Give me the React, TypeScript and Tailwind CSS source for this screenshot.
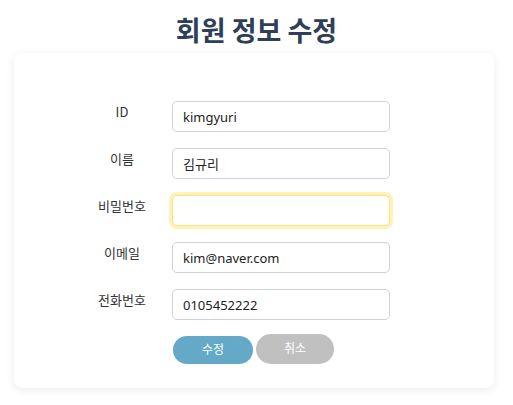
import React from "react";

const rows = [
  { label: "ID", value: "kimgyuri" },
  { label: "이름", value: "김규리" },
  { label: "비밀번호", value: "", focus: true },
  { label: "이메일", value: "kim@naver.com" },
  { label: "전화번호", value: "0105452222" },
];

export default function App() {
  return (
    <div
      className="min-h-[405px] w-[513px] bg-white pt-[14px]"
      style={{ fontFamily: "'Noto Sans', 'Noto Sans CJK KR', sans-serif" }}
    >
      <h1
        className="text-center text-[27px] font-bold leading-[32px] text-[#2e4057]"
        style={{ fontFamily: "'Noto Sans CJK KR', sans-serif" }}
      >
        회원 정보 수정
      </h1>
      <div className="mx-[14px] mt-[7px] w-[480px] rounded-[8px] bg-white pt-[48px] pb-[24px] shadow-[0_2px_10px_rgba(0,0,0,0.08)]">
        <div className="flex flex-col gap-[16px]">
          {rows.map((r) => (
            <div key={r.label} className="flex items-start">
              <div
                className="ml-[58px] w-[100px] text-center text-[13px] leading-[22px] text-[#333]"
                style={{ fontFamily: "'Noto Sans CJK KR', sans-serif" }}
              >
                {r.label}
              </div>
              <input
                readOnly
                value={r.value}
                type="text"
                className={
                  r.focus
                    ? "h-[31px] w-[218px] rounded-[5px] border border-[#ffdf7e] bg-white px-[10px] text-[13px] text-[#222] shadow-[0_0_0_3px_#fff1b8] outline-none"
                    : "h-[31px] w-[218px] rounded-[5px] border border-[#cfd1d6] bg-white px-[10px] text-[13px] text-[#222] outline-none"
                }
              />
            </div>
          ))}
        </div>
        <div className="mt-[14px] ml-[159px] flex items-end gap-[3px]">
          <button className="h-[28px] w-[80px] rounded-full bg-[#64a9c8] text-[12px] text-white">
            수정
          </button>
          <button className="h-[30px] w-[78px] rounded-full bg-[#c0c0c0] text-[12px] text-white">
            취소
          </button>
        </div>
      </div>
    </div>
  );
}
